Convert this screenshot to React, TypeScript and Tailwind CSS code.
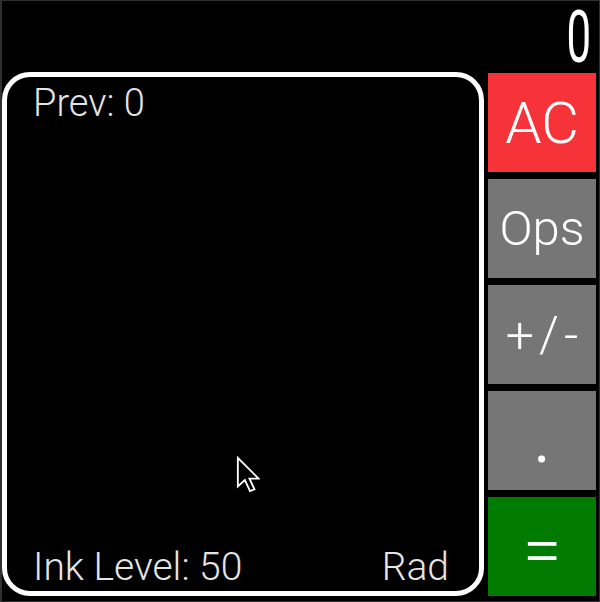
const font = { fontFamily: "Roboto, 'Noto Sans', sans-serif" };

type Key = { label: string; color: string; size: string };

const keys: Key[] = [
  { label: "AC", color: "bg-[#f63339]", size: "text-[58px] font-light" },
  { label: "Ops", color: "bg-[#767676]", size: "text-[49px] font-light" },
  { label: "+/-", color: "bg-[#767676]", size: "text-[50px] font-light tracking-[5px] pl-[5px]" },
  { label: ".", color: "bg-[#767676]", size: "text-[64px] font-normal" },
  { label: "=", color: "bg-[#017b01]", size: "text-[70px] font-light pt-[6px]" },
];

function Cursor() {
  return (
    <svg
      className="absolute left-[229px] top-[379px]"
      width="24"
      height="37"
      viewBox="0 0 13 20"
    >
      <path
        d="M1 1 V16.5 L4.8 13 L7.6 19 L10 18 L7.3 12.2 H12.2 Z"
        fill="black"
        stroke="white"
        strokeWidth="1"
        strokeLinejoin="miter"
      />
    </svg>
  );
}

export default function App() {
  return (
    <div
      className="w-[600px] h-[602px] bg-black border-l-2 border-t border-r border-b border-[#303030] flex flex-col text-[#e4e4e4]"
      style={font}
    >
      {/* display */}
      <div className="h-[71px] flex justify-end items-start pr-[8px]">
        <span className="text-[73px] leading-[72px] font-normal text-white inline-block scale-x-[0.6] origin-right">
          0
        </span>
      </div>

      <div className="flex flex-1 gap-[4px] pb-[5px] pr-[3px]">
        {/* ink panel */}
        <div className="relative w-[482px] border-[5px] border-white rounded-[28px] flex flex-col justify-between pl-[26px] pr-[30px] pt-[4px] pb-[2px]">
          <div className="text-[38px] leading-[44px] font-light">Prev: 0</div>
          <div className="flex justify-between items-end text-[39px] leading-[44px] font-light">
            <span>Ink Level: 50</span>
            <span>Rad</span>
          </div>
          <Cursor />
        </div>

        {/* keys */}
        <div className="flex-1 grid grid-rows-5 gap-[7px] mt-[1px]">
          {keys.map((k) => (
            <div
              key={k.label}
              className={`min-h-0 flex items-center justify-center ${k.color} ${k.size} text-white leading-none`}
            >
              {k.label}
            </div>
          ))}
        </div>
      </div>
    </div>
  );
}
